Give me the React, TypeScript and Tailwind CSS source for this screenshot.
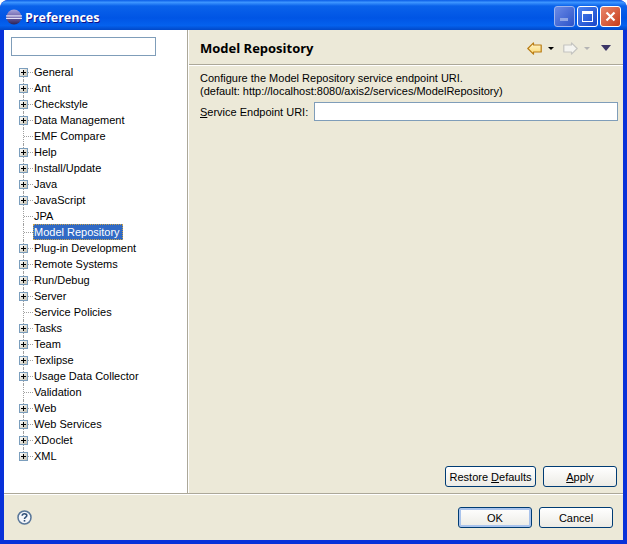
import React from 'react';

const items = [
  { label: 'General', open: true },
  { label: 'Ant', open: true },
  { label: 'Checkstyle', open: true },
  { label: 'Data Management', open: true },
  { label: 'EMF Compare', open: false },
  { label: 'Help', open: true },
  { label: 'Install/Update', open: true },
  { label: 'Java', open: true },
  { label: 'JavaScript', open: true },
  { label: 'JPA', open: false },
  { label: 'Model Repository', open: false, selected: true },
  { label: 'Plug-in Development', open: true },
  { label: 'Remote Systems', open: true },
  { label: 'Run/Debug', open: true },
  { label: 'Server', open: true },
  { label: 'Service Policies', open: false },
  { label: 'Tasks', open: true },
  { label: 'Team', open: true },
  { label: 'Texlipse', open: true },
  { label: 'Usage Data Collector', open: true },
  { label: 'Validation', open: false },
  { label: 'Web', open: true },
  { label: 'Web Services', open: true },
  { label: 'XDoclet', open: true },
  { label: 'XML', open: true }
];

function EclipseLogo() {
  return (
    <svg width="16" height="16" viewBox="0 0 16 16" className="shrink-0">
      <defs>
        <linearGradient id="ball" x1="0" y1="0" x2="0" y2="1">
          <stop offset="0" stopColor="#a9a6dc" />
          <stop offset="0.5" stopColor="#6a5fa8" />
          <stop offset="1" stopColor="#2c2255" />
        </linearGradient>
      </defs>
      <circle cx="8" cy="8" r="7.5" fill="url(#ball)" />
      <rect x="0" y="6.4" width="16" height="1.1" fill="#f2f0ff" />
      <rect x="0" y="8.8" width="16" height="1.1" fill="#f2f0ff" />
    </svg>
  );
}

function Expander() {
  return (
    <div className="w-[9px] h-[9px] border border-[#7b9ebd] bg-gradient-to-br from-white to-[#c6c2b2] relative shrink-0">
      <div className="absolute left-[1px] top-[3px] w-[5px] h-[1px] bg-black" />
      <div className="absolute left-[3px] top-[1px] w-[1px] h-[5px] bg-black" />
    </div>
  );
}

function TreeRow({ label, open, selected, first, last }: { label: string; open: boolean; selected?: boolean; first: boolean; last: boolean }) {
  return (
    <div className="h-4 relative pl-[19px] pt-[4px]">
      <div
        className={`absolute left-[23px] w-0 border-l border-dotted border-[#a0a0a0] ${first ? 'top-2' : 'top-0'} ${last ? 'bottom-2' : 'bottom-0'}`}
      />
      <div className="absolute left-[24px] top-[8px] w-[9px] border-t border-dotted border-[#a0a0a0]" />
      <div className="w-[9px] h-[9px] relative z-10">{open && <Expander />}</div>
      <span
        className={`absolute left-[33px] top-0 h-[16px] pl-[1px] leading-[17px] whitespace-nowrap z-10 ${selected ? 'pr-[3px] bg-[#316ac5] text-white outline-1 outline-dotted outline-offset-[-1px] outline-[#c9a14a]' : 'pr-[1px] text-black'}`}
      >
        {label}
      </span>
    </div>
  );
}

function NavArrow({ flip, disabled }: { flip?: boolean; disabled?: boolean }) {
  return (
    <svg width="15" height="13" viewBox="0 0 15 13" className={flip ? '-scale-x-100' : ''}>
      <defs>
        <linearGradient id="arrowOn" x1="0" y1="0" x2="0" y2="1">
          <stop offset="0" stopColor="#fff6cf" />
          <stop offset="1" stopColor="#fbd76e" />
        </linearGradient>
      </defs>
      <path
        d="M0.8 6.5 L6.5 0.8 V3 H14.2 V10 H6.5 V12.2 Z"
        fill={disabled ? '#f4f4f0' : 'url(#arrowOn)'}
        stroke={disabled ? '#c4c4c0' : '#b97c14'}
        strokeWidth="1.2"
        strokeLinejoin="round"
      />
    </svg>
  );
}

function Button({ children, w, def }: { children: React.ReactNode; w: string; def?: boolean }) {
  return (
    <button
      className={`${w} h-[21px] pt-[2px] rounded-[3px] border border-[#003c74] bg-gradient-to-b from-white to-[#ecebe5] text-black text-center leading-[17px] ${def ? 'shadow-[inset_0_0_0_2px_#a9c3ec]' : ''}`}
    >
      {children}
    </button>
  );
}

export default function App() {
  return (
    <div className="w-[627px] h-[544px] overflow-hidden text-[11px] font-['Liberation_Sans',sans-serif] text-black flex flex-col bg-[#0831d9] rounded-t-[8px]">
      <div className="h-[30px] shrink-0 flex items-center rounded-t-[8px] pl-[6px] pr-[6px] pt-[3px] bg-[linear-gradient(to_bottom,#0a5ce6_0%,#3d95ff_8%,#0a62ea_20%,#0055e5_60%,#0461ee_85%,#0148c8_100%)]">
        <EclipseLogo />
        <span className="ml-[3px] mt-[4px] text-white font-bold text-[12.5px] font-['Open_Sans',sans-serif] [text-shadow:1px_1px_0_#0f1089]">
          Preferences
        </span>
        <div className="ml-auto flex gap-[2px] -mt-[1px]">
          <div className="w-[21px] h-[21px] rounded-[3px] border border-[#9db4ee] bg-gradient-to-br from-[#6b8ae6] to-[#2c52c8] flex items-end pl-[5px] pb-[5px]">
            <div className="w-[8px] h-[3px] bg-[#8fa6e6]" />
          </div>
          <div className="w-[21px] h-[21px] rounded-[3px] border border-white bg-gradient-to-br from-[#4c82f0] to-[#1a45c8] flex items-center justify-center">
            <div className="w-[11px] h-[11px] border border-white border-t-[3px]" />
          </div>
          <div className="w-[21px] h-[21px] rounded-[3px] border border-white bg-gradient-to-br from-[#e9856a] to-[#c63a14] flex items-center justify-center">
            <svg width="11" height="11" viewBox="0 0 11 11">
              <path d="M1.5 1.5 L9.5 9.5 M9.5 1.5 L1.5 9.5" stroke="white" strokeWidth="2.2" />
            </svg>
          </div>
        </div>
      </div>

      <div className="flex-1 min-h-0 mx-[4px] mb-[4px] flex flex-col bg-[#ece9d8]">
        <div className="flex-1 min-h-0 flex">
          <div className="w-[183px] shrink-0 bg-white pt-[7px]">
            <input className="block ml-[7px] w-[145px] h-[19px] border border-[#7f9db9] bg-white" />
            <div className="mt-[8px] -ml-[4px]">
              {items.map((item, i) => (
                <TreeRow
                  key={item.label}
                  label={item.label}
                  open={item.open}
                  selected={item.selected}
                  first={i === 0}
                  last={i === items.length - 1}
                />
              ))}
            </div>
          </div>
          <div className="w-[1px] bg-[#aca899]" />
          <div className="flex-1 min-w-0 flex flex-col border-l border-white">
            <div className="h-[35px] shrink-0 flex items-center pl-[11px] pr-[12px] pt-[2px] border-b border-[#aca899] shadow-[0_1px_0_#ffffff]">
              <span className="mt-[2px] font-bold text-[13px] font-['Open_Sans',sans-serif]">Model Repository</span>
              <div className="ml-auto flex items-center">
                <NavArrow />
                <div className="ml-[6px] w-0 h-0 border-x-[3px] border-x-transparent border-t-[3px] border-t-black" />
                <div className="ml-[9px]">
                  <NavArrow flip disabled />
                </div>
                <div className="ml-[6px] w-0 h-0 border-x-[3px] border-x-transparent border-t-[3px] border-t-[#b4b4b4]" />
                <div className="ml-[11px] w-0 h-0 border-x-[5px] border-x-transparent border-t-[6px] border-t-[#3b3566]" />
              </div>
            </div>
            <div className="flex-1 min-h-0 flex flex-col pl-[11px] pr-[5px] pt-[7px] pb-[6px]">
              <div className="leading-[13px]">
                <div>Configure the Model Repository service endpoint URI.</div>
                <div>(default: http://localhost:8080/axis2/services/ModelRepository)</div>
              </div>
              <div className="mt-[4px] flex items-center">
                <span className="w-[114px] shrink-0 pt-[2px]">
                  <span className="underline">S</span>ervice Endpoint URI:
                </span>
                <input className="flex-1 min-w-0 h-[19px] border border-[#7f9db9] bg-white" />
              </div>
              <div className="mt-auto mr-[1px] flex justify-end gap-[7px]">
                <Button w="w-[91px]">
                  Restore <span className="underline">D</span>efaults
                </Button>
                <Button w="w-[74px]">
                  <span className="underline">A</span>pply
                </Button>
              </div>
            </div>
          </div>
        </div>
        <div className="h-[47px] shrink-0 border-t border-[#aca899] shadow-[inset_0_1px_0_#ffffff] flex items-center pl-[13px] pr-[10px]">
          <svg width="15" height="15" viewBox="0 0 15 15">
            <circle cx="7.5" cy="7.5" r="6.5" fill="#f4f6fa" stroke="#587699" strokeWidth="1.5" />
            <path d="M5.2 5.8 C5.4 3.2 9.8 3.2 9.8 5.6 C9.8 7.2 7.5 7.1 7.5 9" fill="none" stroke="#2f4f78" strokeWidth="1.6" />
            <rect x="6.7" y="10" width="1.6" height="1.6" fill="#2f4f78" />
          </svg>
          <div className="ml-auto flex gap-[7px]">
            <Button w="w-[74px]" def>
              OK
            </Button>
            <Button w="w-[74px]">Cancel</Button>
          </div>
        </div>
      </div>
    </div>
  );
}
